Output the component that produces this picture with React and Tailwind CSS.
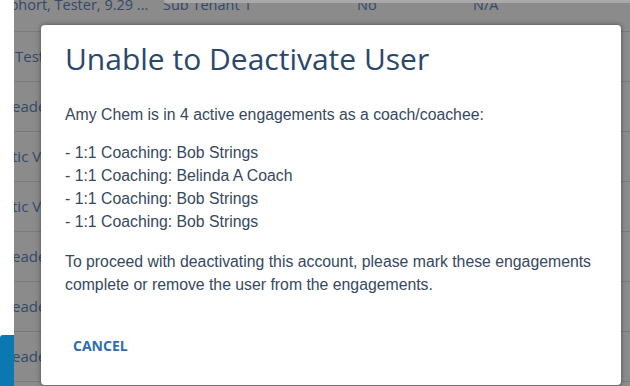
import React from "react";

const rowFont = { fontFamily: '"Open Sans", "Noto Sans", sans-serif' };

export default function App() {
  const rows = [
    { text: "Tester", offset: "ml-[1px]" },
    { text: "eader", offset: "ml-[-2px]" },
    { text: "tic Viewer", offset: "ml-[-2px]" },
    { text: "tic Viewer", offset: "ml-[-2px]" },
    { text: "eader", offset: "ml-[-2px]" },
    { text: "eader", offset: "ml-[-2px]" },
    { text: "eader", offset: "ml-[-2px]" },
  ];
  return (
    <div className="w-[630px] h-[386px] flex overflow-hidden bg-white">
      <div className="w-[14px] flex flex-col shrink-0">
        <div className="flex-1 bg-white" />
        <div className="h-[51px] bg-[#0b78b2] rounded-tl-[3px]" />
      </div>
      <div className="relative flex-1 bg-[#8b8b8c] overflow-hidden">
        <div
          className="h-[32px] border-b border-[#7b7b7c] flex items-start text-[14.5px] leading-[14px] text-[#344967]"
          style={rowFont}
        >
          <div className="w-[162.5px] ml-[-13.5px] -mt-[2px] whitespace-nowrap shrink-0">Cohort, Tester, 9.29 ...</div>
          <div className="w-[194px] -mt-[2px] whitespace-nowrap shrink-0">Sub Tenant 1</div>
          <div className="w-[116px] -mt-[2px] whitespace-nowrap shrink-0">No</div>
          <div className="-mt-[2px] whitespace-nowrap">N/A</div>
        </div>
        {rows.map((r, i) => (
          <div
            key={i}
            className="h-[50px] border-b border-[#7b7b7c] flex items-center text-[15px] text-[#344967]"
            style={rowFont}
          >
            <div className={`whitespace-nowrap ${r.offset}`}>{r.text}</div>
          </div>
        ))}
        <div className="absolute left-[150px] right-0 top-0 h-[3px] bg-[#a9a9aa]" />

        <div className="absolute left-[27px] top-[25px] w-[580px] h-[360px] bg-white rounded-[4px] shadow-[0_0_5px_rgba(0,0,0,0.45)] px-[24px] pt-[14px]">
          <h1
            className="text-[30px] leading-[40px] text-[#2b486c] font-normal whitespace-nowrap"
            style={{ fontFamily: '"Open Sans", "Noto Sans", sans-serif' }}
          >
            Unable to Deactivate User
          </h1>
          <div
            className="text-[15.8px] leading-[23px] text-[#36485f] whitespace-nowrap"
            style={{ fontFamily: '"Liberation Sans", Arial, sans-serif' }}
          >
            <p className="mt-[23.6px]">Amy Chem is in 4 active engagements as a coach/coachee:</p>
            <ul className="mt-[15px]">
              <li>- 1:1 Coaching: Bob Strings</li>
              <li>- 1:1 Coaching: Belinda A Coach</li>
              <li>- 1:1 Coaching: Bob Strings</li>
              <li>- 1:1 Coaching: Bob Strings</li>
            </ul>
            <p className="mt-[17px]">
              To proceed with deactivating this account, please mark these engagements
              <br />
              complete or remove the user from the engagements.
            </p>
          </div>
          <button
            className="mt-[40px] px-[8px] text-[14px] leading-[20px] font-bold text-[#2f6cb3]"
            style={{ fontFamily: '"Open Sans", "Noto Sans", sans-serif' }}
          >
            CANCEL
          </button>
        </div>
      </div>
    </div>
  );
}
